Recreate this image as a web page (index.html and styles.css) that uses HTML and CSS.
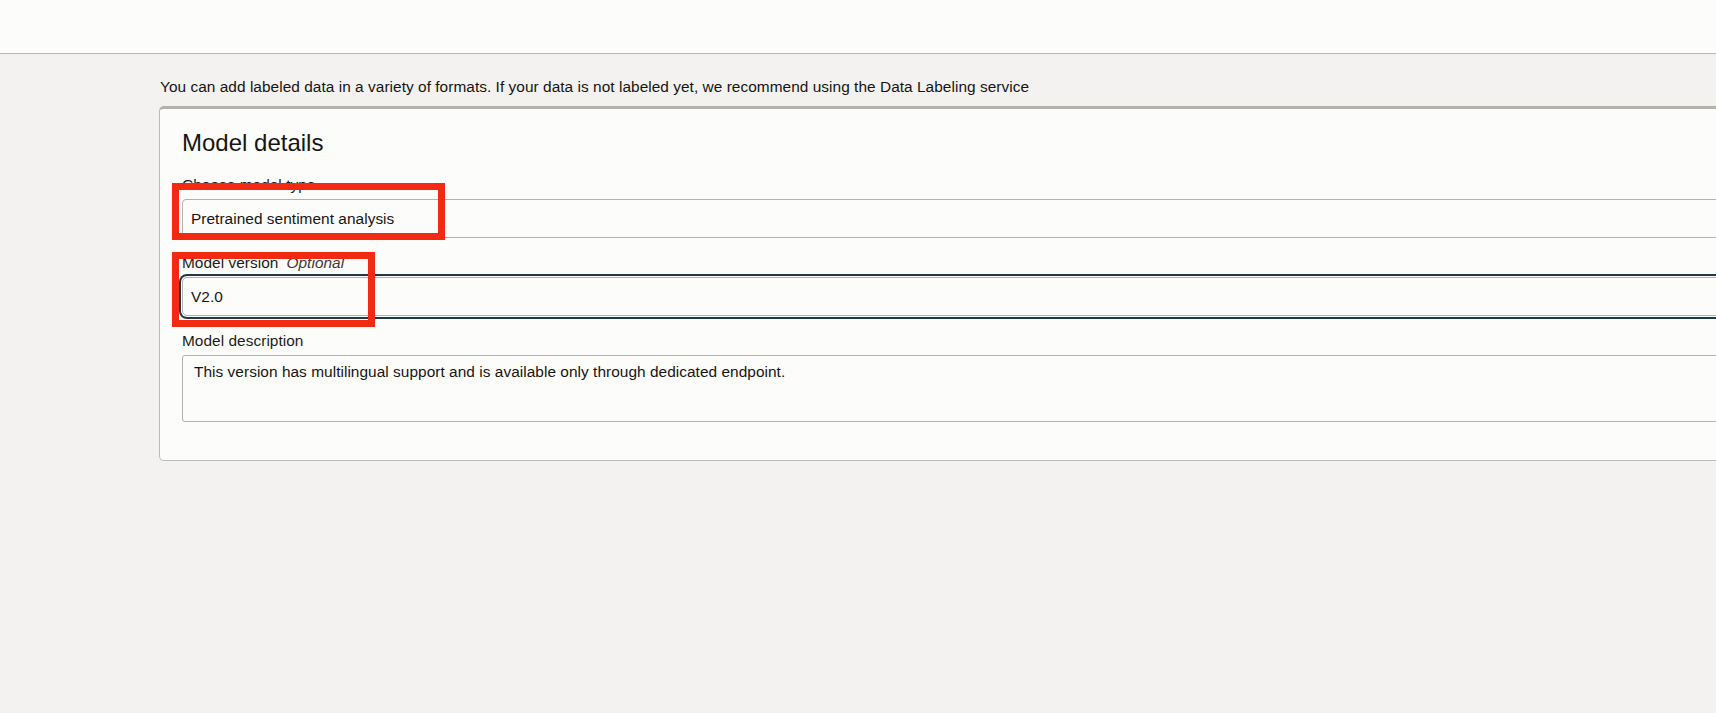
FILE: index.html
```html
<!DOCTYPE html>
<html lang="en">
<head>
<meta charset="utf-8">
<title>Model details</title>
<link rel="stylesheet" href="styles.css">
</head>
<body>
<header class="topbar"></header>
<main class="content">
  <p class="intro">You can add labeled data in a variety of formats. If your data is not labeled yet, we recommend using the Data Labeling service</p>
  <section class="card">
    <h2 class="card-title">Model details</h2>
    <div class="field">
      <label class="field-label">Choose model type</label>
      <div class="input">Pretrained sentiment analysis</div>
    </div>
    <div class="field">
      <label class="field-label">Model version<span class="optional">Optional</span></label>
      <div class="input input-focus">V2.0</div>
    </div>
    <div class="field">
      <label class="field-label">Model description</label>
      <div class="textarea">This version has multilingual support and is available only through dedicated endpoint.</div>
    </div>
  </section>
</main>
<div class="annot annot-type"></div>
<div class="annot annot-version"></div>
</body>
</html>
```
FILE: styles.css
```css
html, body {
  margin: 0;
  padding: 0;
}
body {
  background: #f3f2f0;
  color: #161513;
  font-family: "Liberation Sans", Arial, Helvetica, sans-serif;
  font-size: 15.4px;
  line-height: 20px;
  letter-spacing: 0.05px;
  overflow: hidden;
  width: 1716px;
  height: 713px;
  position: relative;
}
.topbar {
  height: 53px;
  background: #fcfcfb;
  border-bottom: 1px solid #b9b6b3;
}
.content {
  padding: 23px 0 0 159px;
}
.intro {
  margin: 0 0 9px 1px;
  white-space: nowrap;
}
.card {
  background: #fcfcfb;
  border: 1px solid #bdbab7;
  border-top: 3px solid #b4b0ac;
  border-radius: 5px 0 0 5px;
  margin-right: -60px;
  padding: 19px 0 38px 22px;
  display: flex;
  flex-direction: column;
  gap: 15px;
}
.card-title {
  margin: 0 0 2px 0;
  font-size: 24px;
  line-height: 30px;
  font-weight: normal;
  letter-spacing: 0;
}
.field {
  display: flex;
  flex-direction: column;
  gap: 4px;
}
.field-label {
  display: block;
  height: 20px;
  color: #1d1c1a;
}
.optional {
  font-style: italic;
  margin-left: 8px;
  color: #3b3936;
}
.input {
  height: 39px;
  box-sizing: border-box;
  border: 1px solid #b3b0ad;
  border-radius: 4px 0 0 4px;
  background: #fcfcfb;
  padding: 0 8px;
  display: flex;
  align-items: center;
}
.input-focus {
  box-shadow: 0 0 0 1px #fcfcfb, 0 0 0 3px #1d3a45;
  border-radius: 5px 0 0 5px;
}
.textarea {
  height: 67px;
  box-sizing: border-box;
  border: 1px solid #b3b0ad;
  border-radius: 3px 0 0 3px;
  background: #fcfcfb;
  padding: 6px 11px;
}
.annot {
  position: absolute;
  border: 7px solid #f32a12;
  box-sizing: border-box;
  pointer-events: none;
}
.annot-type {
  left: 172px;
  top: 183px;
  width: 273px;
  height: 57px;
}
.annot-version {
  left: 172px;
  top: 252px;
  width: 203px;
  height: 75px;
}
```
